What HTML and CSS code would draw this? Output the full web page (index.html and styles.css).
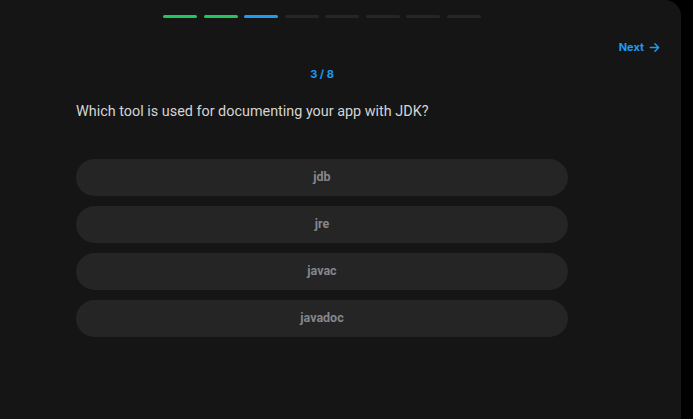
FILE: index.html
```html
<!DOCTYPE html>
<html>
<head>
<meta charset="utf-8">
<link rel="stylesheet" href="styles.css">
</head>
<body>
<div class="card">
  <div class="progress">
    <span class="seg done"></span>
    <span class="seg done"></span>
    <span class="seg current"></span>
    <span class="seg"></span>
    <span class="seg"></span>
    <span class="seg"></span>
    <span class="seg"></span>
    <span class="seg"></span>
  </div>
  <div class="toolbar">
    <a class="next">Next
      <svg width="11" height="11" viewBox="0 0 12 12" fill="none" stroke="currentColor" stroke-width="1.6" stroke-linecap="round" stroke-linejoin="round"><path d="M1.5 6h9M6.5 2l4 4-4 4"/></svg>
    </a>
  </div>
  <div class="content">
    <div class="counter">3 / 8</div>
    <div class="question">Which tool is used for documenting your app with JDK?</div>
    <div class="options">
      <button class="option">jdb</button>
      <button class="option">jre</button>
      <button class="option">javac</button>
      <button class="option">javadoc</button>
    </div>
  </div>
</div>
</body>
</html>
```
FILE: styles.css
```css
html, body {
  margin: 0;
  padding: 0;
  background: #000;
  font-family: Inter, "Noto Sans", sans-serif;
}
.card {
  width: 681px;
  height: 419px;
  background: #151515;
  border-top-right-radius: 16px;
  padding-top: 15px;
  box-sizing: border-box;
}
.progress {
  width: 492px;
  margin-left: 76px;
  display: flex;
  justify-content: center;
  gap: 6.6px;
}
.seg {
  width: 34px;
  height: 3px;
  border-radius: 2px;
  background: #262626;
}
.seg.done { background: #22c55e; }
.seg.current { background: #1d9bf0; }
.toolbar {
  display: flex;
  justify-content: flex-end;
  padding-right: 21px;
  margin-top: 22px;
}
.next {
  display: flex;
  align-items: center;
  gap: 5px;
  color: #1d9bf0;
  font-size: 11px;
  font-weight: 700;
  line-height: 14px;
}
.content {
  width: 492px;
  margin-left: 76px;
}
.counter {
  margin-top: 13px;
  text-align: center;
  color: #1d9bf0;
  font-size: 11px;
  font-weight: 700;
  line-height: 14px;
}
.question {
  margin-top: 21px;
  color: #d4d4d4;
  font-family: Roboto, "Noto Sans", sans-serif;
  font-size: 14.4px;
  line-height: 20px;
}
.options {
  margin-top: 37px;
  display: flex;
  flex-direction: column;
  gap: 10px;
}
.option {
  height: 37px;
  border: none;
  border-radius: 19px;
  background: #252525;
  color: #84878c;
  font-family: Roboto, "Noto Sans", sans-serif;
  font-size: 12.5px;
  font-weight: 700;
  padding: 0 0 2px;
}
```
